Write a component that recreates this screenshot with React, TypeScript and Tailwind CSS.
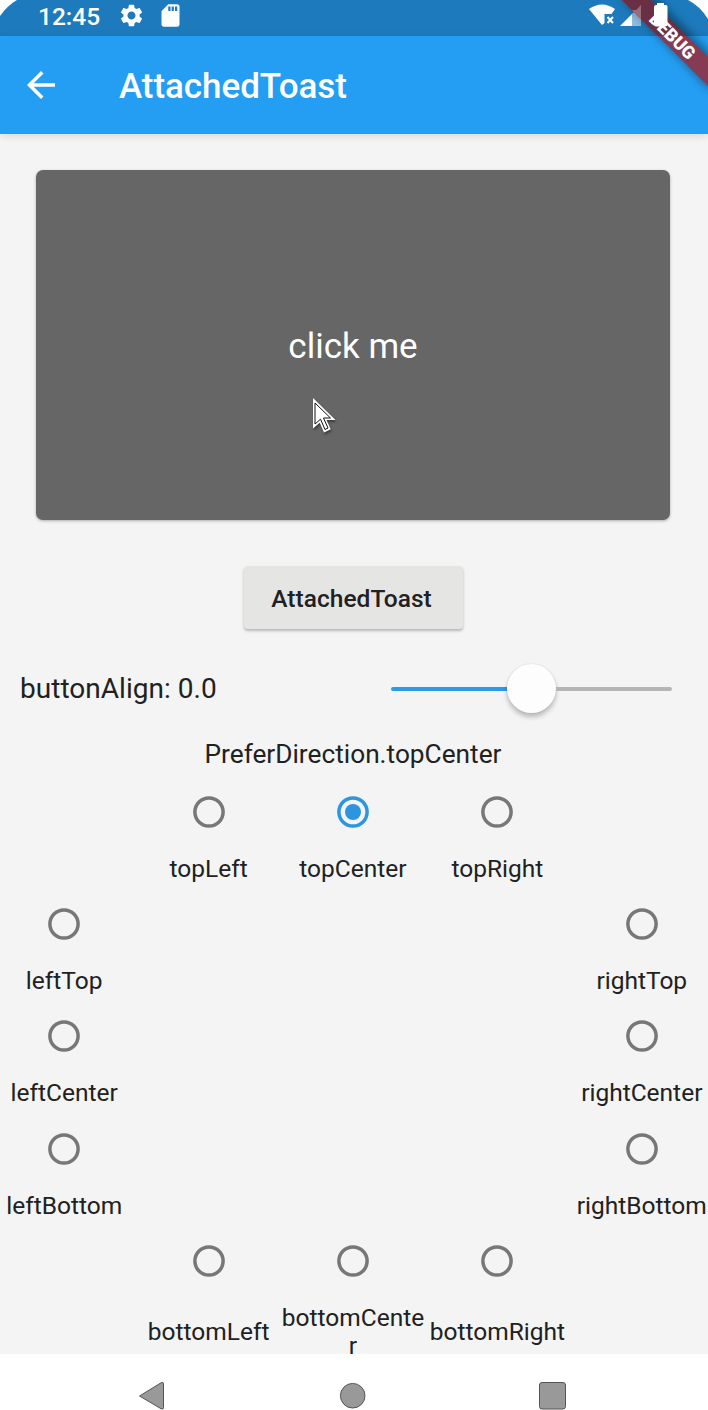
import React from "react";
import { MdArrowBack, MdSdCard, MdSettings } from "react-icons/md";

function StatusBar() {
  return (
    <div className="h-9 bg-[#1c7abd] text-white">
      <div className="flex h-[31px] items-center">
        <span className="ml-[38px] w-[80px] pt-px text-[24.5px] leading-[31px] font-medium">12:45</span>
        <MdSettings className="size-[27px]" />
        <MdSdCard className="ml-[12px] size-[27px]" />
      </div>
    </div>
  );
}

function StatusOverlay() {
  return (
    <svg className="absolute top-0 left-0 z-10" width="708" height="134" viewBox="0 0 708 134">
      <defs>
        <filter id="soft" x="-30%" y="-30%" width="160%" height="160%">
          <feGaussianBlur stdDeviation="5" />
        </filter>
      </defs>
      <path d="M0 0H17Q8 5 0 16Z" fill="#fff" />
      <path d="M589 9Q602 0 615 9L611.500 14H604.500V23L602 25Z" fill="#fff" />
      <path d="M607.500 17L613 23M613 17L607.500 23" stroke="#fff" strokeWidth="2" />
      <path d="M620 26L632 14V26Z" fill="#fff" />
      <path d="M632 14L641 5V26H632Z" fill="#fff" fillOpacity=".5" />
      <path d="M620 -4H653L712 55V92Z" fill="#000" fillOpacity=".4" filter="url(#soft)" />
      <path d="M622 0H651L708 57V86Z" fill="#863b54" />
      <path d="M622 0H651L687 36H658Z" fill="#6b2f43" />
      <path d="M632 10L641 19V5L636 10Z" fill="#fff" fillOpacity=".3" />
      <text
        x="0"
        y="6.300"
        transform="translate(672.500 36) rotate(45)"
        textAnchor="middle"
        fill="#fff"
        fontFamily="Roboto, sans-serif"
        fontSize="17.800"
        fontWeight="900"
      >
        DEBUG
      </text>
      <path d="M657 3H664V5H666Q667.500 5 667.500 7V24.500Q667.500 26.500 665.500 26.500H656Q654 26.500 654 24.500V7Q654 5 656 5H657Z" fill="#fff" />
      <path d="M688 0H708V19Q700 6 688 0Z" fill="#fff" />
    </svg>
  );
}

function AppBar() {
  return (
    <header className="relative flex h-[98px] items-center bg-[#249ef2] text-white shadow-[0_2px_8px_rgba(0,0,0,0.12)]">
      <MdArrowBack className="ml-5 size-[42px]" />
      <h1 className="ml-[57px] pt-[3px] text-[35px] leading-none font-medium tracking-[-0.06px]">AttachedToast</h1>
    </header>
  );
}

function Pointer() {
  return (
    <svg className="absolute top-[226px] left-[275px] drop-shadow-[1px_2px_1px_rgba(0,0,0,0.4)]" width="26" height="40" viewBox="0 0 26 40">
      <path d="M2 2V32.500L8.700 26.800L13 36.500L19.800 33.300L15.500 24H24.500Z" fill="#fff" />
      <path d="M4 7V28L9.500 23.200L14 33.500L17 32L12.500 22H19.500Z" fill="#fff" stroke="#111" strokeWidth="1" />
    </svg>
  );
}

function Option({ label, selected = false, tall = false }: { label: string; selected?: boolean; tall?: boolean }) {
  const color = selected ? "#2d95df" : "#777";
  return (
    <div className="flex flex-col items-center">
      <div className="flex h-[84px] items-center justify-center">
        <svg width="32" height="32" viewBox="0 0 32 32">
          <circle cx="16" cy="16" r="14.100" fill="none" stroke={color} strokeWidth="3.500" />
          {selected && <circle cx="16" cy="16" r="8" fill={color} />}
        </svg>
      </div>
      <div className={tall ? "flex h-14 w-full items-center justify-center pt-[2px]" : "flex h-[28.3px] w-full items-center justify-center pt-[2px]"}>
        <span className="max-w-full text-center text-[24.5px] leading-[28px] break-all">{label}</span>
      </div>
    </div>
  );
}

const sides = [
  ["leftTop", "rightTop"],
  ["leftCenter", "rightCenter"],
  ["leftBottom", "rightBottom"],
];

export default function App() {
  return (
    <div className="relative flex h-[1410px] w-[708px] flex-col overflow-hidden bg-[#f4f4f4] font-[Roboto,sans-serif] text-[#212121]">
      <StatusBar />
      <AppBar />
      <StatusOverlay />
      <main className="flex h-[1220px] shrink-0 flex-col overflow-hidden pt-[36px]">
        <div className="relative ml-[36px] flex h-[350px] w-[634px] shrink-0 items-center justify-center rounded-[7px] bg-[#666] pt-[4px] text-[35px] text-white shadow-[0_1px_3px_rgba(0,0,0,0.3)]">
          click me
          <Pointer />
        </div>
        <button className="mt-[46px] ml-[244px] h-[63px] w-[219px] shrink-0 rounded-[4px] bg-[#e5e5e4] pt-[3px] pr-[4px] text-[24.5px] font-medium tracking-[0.04px] shadow-[0_2px_3px_rgba(0,0,0,0.25)]">
          AttachedToast
        </button>
        <div className="mt-[21px] flex h-[77px] shrink-0 items-center pl-5">
          <span className="w-[371px] pt-px text-[28px] tracking-[0.03px]">buttonAlign: 0.0</span>
          <div className="flex items-center">
            <div className="h-[4px] w-[116px] rounded-l-full bg-[#2d9ae8]" />
            <div className="size-[49px] rounded-full bg-[#fdfdfd] shadow-[0_4px_5px_rgba(0,0,0,0.24),0_0_2px_rgba(0,0,0,0.12)]" />
            <div className="h-[4px] w-[116px] rounded-r-full bg-[#b5b5b5]" />
          </div>
        </div>
        <p className="mt-[10px] h-[32.7px] shrink-0 pt-px pr-[2px] text-center text-[26.25px] leading-[33px]">PreferDirection.topCenter</p>
        <div className="-ml-2 grid w-[722px] shrink-0 grid-cols-5">
          <div />
          <Option label="topLeft" />
          <Option label="topCenter" selected />
          <Option label="topRight" />
          <div />
          {sides.map(([left, right]) => (
            <React.Fragment key={left}>
              <Option label={left} />
              <div className="col-span-3" />
              <Option label={right} />
            </React.Fragment>
          ))}
          <div />
          <Option label="bottomLeft" tall />
          <Option label="bottomCenter" tall />
          <Option label="bottomRight" tall />
          <div />
        </div>
      </main>
      <nav className="h-14 shrink-0 bg-white">
        <svg width="708" height="56" viewBox="0 0 708 56" fill="#999" stroke="#555" strokeWidth="1">
          <path d="M139.500 42L161 28.800Q163.500 27.500 163.500 30V53.500Q163.500 56 161 54.700Z" />
          <circle cx="352.700" cy="41.700" r="12.300" />
          <rect x="539.500" y="28.500" width="26" height="26.500" rx="2.500" />
        </svg>
      </nav>
    </div>
  );
}
